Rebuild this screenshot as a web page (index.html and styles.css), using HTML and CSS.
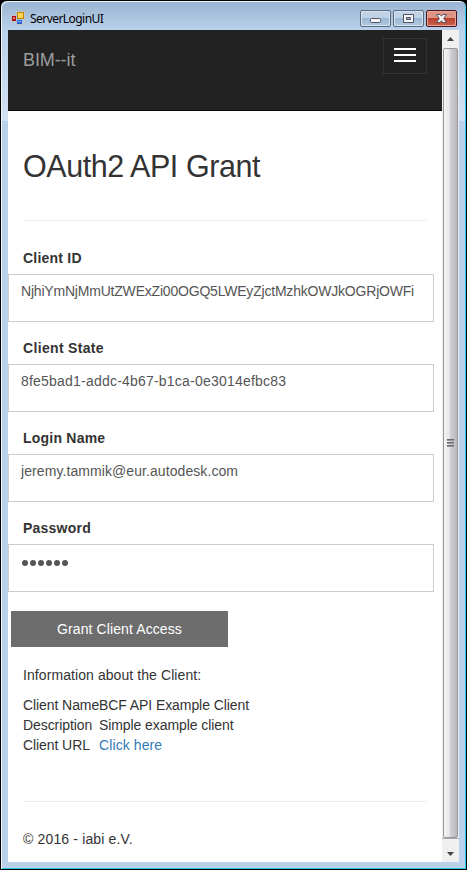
FILE: index.html
```html
<!DOCTYPE html>
<html lang="en">
<head>
<meta charset="utf-8">
<title>ServerLoginUI</title>
<link rel="stylesheet" href="styles.css">
</head>
<body>
<div class="window">
  <header class="titlebar">
    <svg class="app-icon" width="14" height="14" viewBox="0 0 14 14" shape-rendering="crispEdges">
      <path d="M.5 4.500h5v-4h8v13h-8v-3h-5z" fill="none" stroke="#c3c4c6"/>
      <rect x="1" y="5" width="4" height="5" fill="#a91010"/><rect x="2" y="6" width="2" height="2" fill="#f08070"/>
      <rect x="6" y="1" width="7" height="7" fill="#bd8500"/><rect x="7" y="2" width="5" height="5" fill="#ffd651"/>
      <rect x="6" y="9" width="5" height="4" fill="#2c62cb"/><rect x="7" y="10" width="3" height="1" fill="#8fb9ff"/>
    </svg>
    <span class="title">ServerLoginUI</span>
    <div class="controls">
      <span class="ctl"><svg width="29" height="15" viewBox="0 0 29 15"><rect x="9.5" y="7.5" width="10" height="4" rx="1" fill="#f5f5f5" stroke="#535666"/></svg></span>
      <span class="ctl"><svg width="29" height="15" viewBox="0 0 29 15"><path d="M9.500 3.500h10v8h-10zM12.500 6.500v2h4v-2z" fill="#f5f5f5" fill-rule="evenodd" stroke="#535666"/></svg></span>
      <span class="ctl close"><svg width="29" height="15" viewBox="0 0 29 15"><path d="M9.500 3.500h3.500l1.500 1.700 1.500-1.700h3.500l-2.800 4 2.800 4h-3.500l-1.500-1.700-1.500 1.700h-3.500l2.800-4z" fill="#f5f5f5" stroke="#535666"/></svg></span>
    </div>
  </header>
  <div class="client">
    <main class="page">
      <nav class="navbar">
        <span class="brand">BIM--it</span>
        <div class="toggle"><i></i><i></i><i></i></div>
      </nav>
      <h1>OAuth2 API Grant</h1>
      <hr>
      <form class="form">
        <label>Client ID</label>
        <div class="field client-id">NjhiYmNjMmUtZWExZi00OGQ5LWEyZjctMzhkOWJkOGRjOWFi</div>
        <label class="state-label">Client State</label>
        <div class="field client-state">8fe5bad1-addc-4b67-b1ca-0e3014efbc83</div>
        <label>Login Name</label>
        <div class="field login">jeremy.tammik@eur.autodesk.com</div>
        <label>Password</label>
        <div class="field password"><i></i><i></i><i></i><i></i><i></i><i></i></div>
        <button type="button" class="submit">Grant Client Access</button>
      </form>
      <p class="info">Information about the Client:</p>
      <dl class="details">
        <dt>Client Name</dt><dd>BCF API Example Client</dd>
        <dt>Description</dt><dd>Simple example client</dd>
        <dt>Client URL</dt><dd><a>Click here</a></dd>
      </dl>
      <hr>
      <footer>© 2016 - iabi e.V.</footer>
    </main>
    <aside class="scrollbar">
      <svg class="arrow" width="17" height="17" viewBox="0 0 17 17"><path d="M5 11l3.500-4L12 11z" fill="#444"/></svg>
      <div class="thumb"><i></i><i></i><i></i></div>
      <svg class="arrow" width="17" height="24" viewBox="0 0 17 24"><path d="M0 .5h17" stroke="#aaa"/><path d="M5 14h7l-3.500 4z" fill="#444"/></svg>
    </aside>
  </div>
</div>
</body>
</html>
```
FILE: styles.css
```css
* { box-sizing: border-box; }
body { margin: 0; background: #000; font: 14px/20px "Liberation Sans", Arial, sans-serif; color: #333; }
.window { width: 467px; height: 870px; border: 1px solid #000; border-radius: 7px 7px 0 0; padding: 0 6px 6px; display: flex; flex-direction: column;
  background: linear-gradient(#99b4d1, #b9d1ea 29px, #d3e2f2 120px, #b9d1ea 120px);
  box-shadow: inset 1px 1px #eef5fb, inset -1px -1px #27cbe9; }
.titlebar { height: 29px; display: flex; align-items: flex-start; padding: 10px 3px 0 4px; }
.app-icon { flex: none; }
.title { font: 12px/15px "Noto Sans", sans-serif; color: #000; margin-left: 5px; letter-spacing: -.55px; }
.controls { margin-left: auto; display: flex; gap: 2px; margin-top: -1px; }
.ctl { width: 31px; height: 17px; border: 1px solid #5d6b80; border-radius: 2px; box-shadow: inset 0 0 0 1px #d5e3f2; background: linear-gradient(#c0d2e6 50%, #9bb6d3 50%, #b4cae1); }
.ctl svg { display: block; }
.close { border-color: #4b1420; box-shadow: inset 0 0 0 1px #e6a69b; background: linear-gradient(#dc9485 50%, #ba412e 50%, #c9634f); }
.client { height: 832px; margin-left: 1px; width: 451px; display: flex; background: #fff; }
.page { width: 434px; }
.navbar { height: 81px; background: #222; border-bottom: 1px solid #080808; display: flex; justify-content: space-between; padding: 8px 15px 0; }
.brand { font-size: 18px; line-height: 20px; color: #9d9d9d; padding-top: 12px; letter-spacing: -.1px; }
.toggle { width: 44px; height: 36px; border: 1px solid #333; padding: 9px 10px; display: flex; flex-direction: column; gap: 4px; }
.toggle i { height: 2px; background: #fff; }
h1 { font-size: 30.500px; line-height: 34px; font-weight: 400; letter-spacing: -.45px; margin: 38px 15px 37px; }
hr { border: 0; border-top: 1px solid #eee; margin: 0 15px; }
.form { padding-top: 27px; }
label { display: block; font-weight: 700; letter-spacing: .22px; margin: 0 15px 6px; }
.state-label { letter-spacing: .33px; }
.field { width: 426px; height: 48px; border: 1px solid #ccc; padding: 6px 12px; color: #555; margin-bottom: 16px; white-space: nowrap; }
.client-id { letter-spacing: -.2px; }
.client-state { letter-spacing: .21px; }
.login { letter-spacing: .08px; }
.password { display: flex; gap: 2px; padding: 15px 13px; margin-bottom: 19px; }
.password i { width: 6px; height: 6px; border-radius: 50%; background: #555; }
.submit { display: block; width: 217px; height: 36px; margin-left: 3px; border: 0; padding: 0; background: #6d6d6d; color: #fff; font: inherit; letter-spacing: .1px; }
.info { margin: 18px 15px 10px; letter-spacing: .08px; }
.details { display: grid; grid-template-columns: 76px 1fr; margin: 0 15px 46px; white-space: nowrap; letter-spacing: -.08px; }
dd { margin: 0; }
a { color: #337ab7; letter-spacing: .1px; }
footer { margin: 27px 15px 0; letter-spacing: .15px; }
.scrollbar { width: 17px; background: #f0f0f0; display: flex; flex-direction: column; }
.arrow { display: block; flex: none; }
.thumb { flex: 1; margin: 1px 1px 0; border: 1px solid #979797; border-radius: 2px; background: linear-gradient(90deg, #f5f5f5, #e4e4e6 44%, #cfcfd3 50%, #b9b9bd); display: flex; flex-direction: column; align-items: center; justify-content: center; gap: 1px; }
.thumb i { width: 7px; height: 2px; background: linear-gradient(#555, #aaa); }
```
